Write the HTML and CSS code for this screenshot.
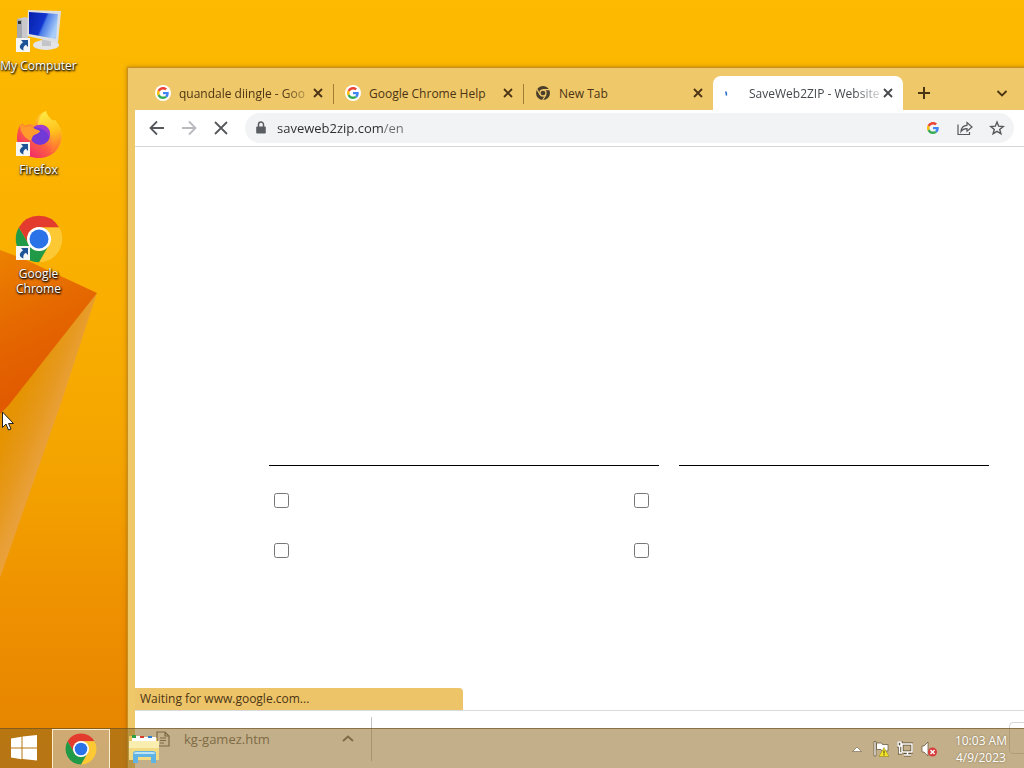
FILE: index.html
```html
<!DOCTYPE html>
<html lang="en">
<head>
  <meta charset="UTF-8" />
  <meta name="viewport" content="width=device-width, initial-scale=1.0"/>
  <title>Desktop</title>
  <link rel="stylesheet" href="styles.css">
</head>
<body>
  <!-- Shared logos -->
  <svg class="defs" aria-hidden="true">
    <symbol id="google" viewBox="0 0 48 48">
      <path fill="#EA4335" d="M24 9.5c3.54 0 6.71 1.22 9.21 3.6l6.85-6.85C35.9 2.38 30.47 0 24 0 14.62 0 6.51 5.38 2.56 13.22l7.98 6.19C12.43 13.72 17.74 9.5 24 9.5z"/>
      <path fill="#4285F4" d="M46.98 24.55c0-1.57-.15-3.09-.38-4.55H24v9.02h12.94c-.58 2.96-2.26 5.48-4.78 7.18l7.73 6c4.51-4.18 7.09-10.36 7.09-17.65z"/>
      <path fill="#FBBC05" d="M10.53 28.59c-.48-1.45-.76-2.99-.76-4.59s.27-3.14.76-4.59l-7.98-6.19C.92 16.46 0 20.12 0 24s.92 7.54 2.56 10.78l7.97-6.19z"/>
      <path fill="#34A853" d="M24 48c6.48 0 11.93-2.13 15.89-5.81l-7.73-6c-2.15 1.45-4.92 2.3-8.16 2.3-6.26 0-11.57-4.22-13.47-9.91l-7.98 6.19C6.51 42.62 14.62 48 24 48z"/>
    </symbol>
    <symbol id="chrome" viewBox="0 0 48 48">
      <path fill="#e33b2e" d="M24 12.5H44.2A23.3 23.3 0 0 0 3.8 12.5L14 29.8A11.5 11.5 0 0 1 24 12.5z"/>
      <path fill="#fcc934" d="M44.2 12.5H24A11.5 11.5 0 0 1 34 29.8L24 47.3A23.3 23.3 0 0 0 44.2 12.5z"/>
      <path fill="#219a48" d="M3.8 12.5L14 29.8A11.5 11.5 0 0 0 34 29.8L24 47.3A23.3 23.3 0 0 1 3.8 12.5z"/>
      <circle cx="24" cy="24" r="12" fill="#fff"/>
      <circle cx="24" cy="24" r="9.5" fill="#2a72e8"/>
    </symbol>
    <symbol id="shortcut" viewBox="0 0 14 14">
      <path fill="#f6f6f4" d="M0 0h14v14H0z"/>
      <path fill="#1f5397" d="M5 2h7v7L9.800 6.800C7.500 8.500 7 10 7.500 12.500 3 11 2.500 7.500 7 4.300z"/>
    </symbol>
    <symbol id="close" viewBox="0 0 16 16">
      <path fill="none" stroke="currentColor" stroke-width="1.8" d="M4 4l8 8M12 4l-8 8"/>
    </symbol>
  </svg>

  <div class="desktop">
    <svg class="wallpaper" viewBox="0 0 128 768" width="128" height="768" aria-hidden="true">
      <defs>
        <linearGradient id="fold" x1="0" y1="0" x2="0.300" y2="1">
          <stop offset="0" stop-color="#ec8200"/>
          <stop offset=".45" stop-color="#e56900"/>
          <stop offset="1" stop-color="#e05500"/>
        </linearGradient>
        <linearGradient id="beam" gradientUnits="userSpaceOnUse" x1="0" y1="440" x2="56" y2="462">
          <stop offset="0" stop-color="#e59300"/>
          <stop offset=".4" stop-color="#e6981a"/>
          <stop offset=".75" stop-color="#e9a03a"/>
          <stop offset="1" stop-color="#eda22c"/>
        </linearGradient>
      </defs>
      <path fill="url(#beam)" d="M97 293L62 400L0 578V400z"/>
      <path fill="url(#fold)" d="M0 250L24 259L97 293L8 406L0 414z"/>
    </svg>

    <nav class="shortcuts" aria-label="Desktop">
      <button class="shortcut">
        <svg class="shortcut-icon" viewBox="0 0 48 48">
          <defs>
            <linearGradient id="screen" x1="0" y1="0" x2="1" y2=".4">
              <stop offset="0" stop-color="#0620a8"/>
              <stop offset=".55" stop-color="#1235cf"/>
              <stop offset=".62" stop-color="#4a7be8"/>
              <stop offset="1" stop-color="#a9cdf8"/>
            </linearGradient>
          </defs>
          <path fill="#c9c9cb" d="M2 12l8-2 3 1v24l-4 2-7-4z"/>
          <path fill="#a5a8ac" d="M2 12l5 1v23l-5-3z"/>
          <path fill="#333" d="M3 14h3v3H3z"/>
          <ellipse cx="31" cy="38" rx="13" ry="5" fill="#e4e4e6"/>
          <path fill="#c3c5c9" d="M27 31l9 1v7H27z"/>
          <path fill="#dedfe1" d="M13 3l33 1-3 32-31-7z"/>
          <path fill="url(#screen)" d="M14 5l29 2-2 25-27-5z"/>
          <use href="#shortcut" x="1" y="31" width="14" height="14"/>
        </svg>
        <span>My Computer</span>
      </button>
      <button class="shortcut">
        <svg class="shortcut-icon" viewBox="0 0 48 48">
          <defs>
            <linearGradient id="flame" x1=".85" y1=".05" x2=".2" y2=".9">
              <stop offset="0" stop-color="#fff03c"/>
              <stop offset=".35" stop-color="#ffb42a"/>
              <stop offset=".65" stop-color="#ff6040"/>
              <stop offset="1" stop-color="#f02c6a"/>
            </linearGradient>
            <linearGradient id="flame-tail" x1="0" y1="0" x2=".2" y2="1">
              <stop offset="0" stop-color="#fff04a"/>
              <stop offset=".6" stop-color="#ffc01c"/>
              <stop offset="1" stop-color="#ff7730"/>
            </linearGradient>
          </defs>
          <path fill="url(#flame)" d="M5 14c2-2 4-1 5 1 3-2 6-2 10-1C20 8 24 2 31 0c1 5 4 7 7 10l2-1c6 7 8 14 6 21-2 10-11 17-22 17C10 47 2 38 2 27c0-5 1-9 3-13z"/>
          <path fill="url(#flame-tail)" d="M31 0c1 5 4 7 7 10l2-1c6 7 8 14 6 21-2 6-6 10-11 12 4-6 5-13 1-19-3-5-11-4-13-10 1-6 3-10 8-13z"/>
          <circle cx="25" cy="24" r="10" fill="#7339d6"/>
          <path fill="#a23ccb" d="M19 16c5-4 14-3 16 5 0 2 0 4-1 5-1-5-6-9-15-10z"/>
          <path fill="#ff9a2c" d="M5 14c2-1 4 0 5 2 4-2 7-1 10 2 2 1 4 1 5 2-1 3-5 3-7 5-2 3-1 6-4 4-5-3-9-8-9-15z"/>
          <use href="#shortcut" x="1" y="31" width="14" height="14"/>
        </svg>
        <span>Firefox</span>
      </button>
      <button class="shortcut">
        <svg class="shortcut-icon" viewBox="0 0 48 48">
          <use href="#chrome" width="48" height="48"/>
          <use href="#shortcut" x="1" y="31" width="14" height="14"/>
        </svg>
        <span>Google Chrome</span>
      </button>
    </nav>

    <!-- Browser window -->
    <section class="window" aria-label="Browser">
      <div class="tabs">
        <div class="tab">
          <span class="favicon"><svg width="12" height="12"><use href="#google"/></svg></span>
          <span class="tab-title tab-title-fade">quandale diingle - Goo</span>
          <button class="icon-btn" aria-label="Close tab"><svg width="16" height="16"><use href="#close"/></svg></button>
        </div>
        <div class="tab">
          <span class="favicon"><svg width="12" height="12"><use href="#google"/></svg></span>
          <span class="tab-title">Google Chrome Help</span>
          <button class="icon-btn" aria-label="Close tab"><svg width="16" height="16"><use href="#close"/></svg></button>
        </div>
        <div class="tab tab-last">
          <svg width="16" height="16" viewBox="0 0 16 16">
            <circle cx="8" cy="8" r="7" fill="#4b3f2c"/>
            <circle cx="8" cy="8" r="3" fill="#4b3f2c" stroke="#efc766" stroke-width="1.300"/>
            <path stroke="#efc766" stroke-width="1.200" d="M8 4.700h6.500M5.100 9.700L2 4.200M10.900 9.700L7.700 15"/>
          </svg>
          <span class="tab-title">New Tab</span>
          <button class="icon-btn" aria-label="Close tab"><svg width="16" height="16"><use href="#close"/></svg></button>
        </div>
        <div class="tab tab-active">
          <svg width="16" height="16" viewBox="0 0 16 16"><path fill="none" stroke="#2d6fc4" stroke-width="1.600" d="M.5 6.500q1.200 1.500.8 4"/></svg>
          <span class="tab-title tab-title-fade">SaveWeb2ZIP - Website</span>
          <button class="icon-btn" aria-label="Close tab"><svg width="16" height="16"><use href="#close"/></svg></button>
        </div>
        <button class="icon-btn new-tab" aria-label="New tab">
          <svg width="16" height="16" viewBox="0 0 16 16"><path stroke="currentColor" stroke-width="2" d="M8 2v12M2 8h12"/></svg>
        </button>
        <button class="icon-btn tab-search" aria-label="Search tabs">
          <svg width="16" height="16" viewBox="0 0 16 16"><path fill="none" stroke="currentColor" stroke-width="1.800" d="M3.500 6L8 10.500 12.500 6"/></svg>
        </button>
      </div>

      <div class="toolbar">
        <button class="icon-btn" aria-label="Back">
          <svg width="16" height="16" viewBox="0 0 16 16"><path fill="none" stroke="currentColor" stroke-width="1.800" d="M15 8H2M8 1.500L1.500 8 8 14.500"/></svg>
        </button>
        <button class="icon-btn disabled" aria-label="Forward" disabled>
          <svg width="16" height="16" viewBox="0 0 16 16"><path fill="none" stroke="currentColor" stroke-width="1.800" d="M1 8h13M8 1.500L14.500 8 8 14.500"/></svg>
        </button>
        <button class="icon-btn" aria-label="Stop loading">
          <svg width="16" height="16" viewBox="0 0 16 16"><path stroke="currentColor" stroke-width="1.800" d="M2 2l12 12M14 2L2 14"/></svg>
        </button>
        <div class="omnibox">
          <svg width="16" height="16" viewBox="0 0 16 16"><path fill="#5b5e63" d="M4 6.500h8a.8.8 0 0 1 .8.8v5.400a.8.8 0 0 1-.8.8H4a.8.8 0 0 1-.8-.8V7.300a.8.8 0 0 1 .8-.8z"/><path fill="none" stroke="#5b5e63" stroke-width="1.500" d="M5.500 7V4.500a2.500 2.500 0 0 1 5 0V7"/></svg>
          <input class="url" type="text" value="saveweb2zip.com/en" aria-label="Address" spellcheck="false">
          <button class="icon-btn" aria-label="Google"><svg width="12" height="12"><use href="#google"/></svg></button>
          <button class="icon-btn" aria-label="Share">
            <svg width="16" height="16" viewBox="0 0 16 16"><path fill="none" stroke="currentColor" stroke-width="1.200" d="M1 4.500V14.500H12.500V12M4 11.500C4.300 7.500 6.500 5.500 10 5.300V2.500L15 7 10 11.300V8.700C7.500 8.600 5.500 9.300 4 11.500z"/></svg>
          </button>
          <button class="icon-btn" aria-label="Bookmark">
            <svg width="16" height="16" viewBox="0 0 16 16"><path fill="none" stroke="currentColor" stroke-width="1.400" d="M8 2l1.700 4.200 4.500.3-3.500 2.900 1.200 4.400L8 11.400l-3.900 2.400 1.200-4.400L1.800 6.500l4.500-.3z"/></svg>
          </button>
        </div>
      </div>

      <main class="page">
        <form class="copier">
          <div class="fields">
            <input class="field field-url" type="text" aria-label="Website address">
            <input class="field" type="text" aria-label="File name">
          </div>
          <div class="options">
            <label class="option"><input type="checkbox" aria-label="Option 1"></label>
            <label class="option"><input type="checkbox" aria-label="Option 2"></label>
            <label class="option"><input type="checkbox" aria-label="Option 3"></label>
            <label class="option"><input type="checkbox" aria-label="Option 4"></label>
          </div>
        </form>
        <div class="status">Waiting for www.google.com...</div>
      </main>

      <div class="shelf">
        <div class="download">
          <svg width="16" height="16" viewBox="0 0 16 16"><path fill="none" stroke="currentColor" stroke-width="1.200" d="M1 1h8l4 4v10H1zM9 1v4h4M4 7h6M4 9.500h6M4 12h4"/></svg>
          <span class="download-name">kg-gamez.htm</span>
          <button class="icon-btn" aria-label="Download options">
            <svg width="16" height="16" viewBox="0 0 16 16"><path fill="none" stroke="currentColor" stroke-width="1.800" d="M3 10l5-4.500L13 10"/></svg>
          </button>
        </div>
        <button class="show-all" aria-label="Show all"></button>
      </div>
    </section>

    <footer class="taskbar">
      <button class="task start" aria-label="Start">
        <svg width="28" height="28" viewBox="0 0 28 28"><path fill="#fff" d="M1 3.500l10.500-1.700v10.700H1zM12.500 1.600L27 0v12.500H12.500zM1 13.500h10.500v10.700L1 22.500zM12.500 13.500H27v12l-14.500-1.600z"/></svg>
      </button>
      <button class="task task-active" aria-label="Google Chrome"><svg width="32" height="32"><use href="#chrome"/></svg></button>
      <button class="task" aria-label="File Explorer">
        <svg width="32" height="32" viewBox="0 0 32 32">
          <path fill="#e8c45c" d="M1 3h9l2 2h17v20H1z"/>
          <path fill="#fff" d="M4 3h8v5H4zM12 4h8v4h-8zM20 4h8v4h-8z"/>
          <path fill="#2f9e44" d="M4 2h4v3H4z"/>
          <path fill="#d33f2c" d="M12 3h4v2h-4z"/>
          <path fill="#2f7fd0" d="M20 3h4v2h-4z"/>
          <path fill="#f2da82" d="M1 8h30v19H1z"/>
          <path fill="#faedb0" d="M1 8h30v7H1z"/>
          <path fill="#5fb4e4" d="M5 30V21q0-3 3-3h17q3 0 3 3v9h-5v-6H10v6z"/>
          <path fill="#b9e4f8" d="M6 21q0-2 2-2h17q2 0 2 2z"/>
        </svg>
      </button>
      <div class="tray">
        <svg width="16" height="16" viewBox="0 0 16 16"><path fill="#fff" stroke="#6b5c3c" stroke-width=".6" d="M3.500 10.500L8 6l4.500 4.500z"/></svg>
        <svg width="16" height="16" viewBox="0 0 16 16">
          <path fill="#fff" stroke="#5e4f30" stroke-width=".7" d="M1 .5h2V15H1zM3.500 2h5l1 1.500H15V10H9L8 8.500H3.500z"/>
          <path fill="#f4e52c" stroke="#8a7b10" stroke-width=".5" d="M11 6.500l5 9H6z"/>
          <path stroke="#5b5208" stroke-width="1.200" d="M11 9.500v3M11 13.300v1.200"/>
        </svg>
        <svg width="16" height="16" viewBox="0 0 16 16">
          <path fill="none" stroke="#5e4f30" stroke-width="3" d="M5 3h10v8H5zM7 14h7M10.500 11v3M1 1h3v4H1zM2.500 5v7H5"/>
          <path fill="none" stroke="#fff" stroke-width="1.500" d="M5 3h10v8H5zM7 14h7M10.500 11v3M1 1h3v4H1zM2.500 5v7H5"/>
        </svg>
        <svg width="16" height="16" viewBox="0 0 16 16">
          <path fill="#fff" stroke="#5e4f30" stroke-width=".7" d="M1 5h2l4-4v14l-4-4H1z"/>
          <circle cx="11.500" cy="11" r="4.500" fill="#d83b3b"/>
          <path stroke="#fff" stroke-width="1.400" d="M9.500 9l4 4M13.500 9l-4 4"/>
        </svg>
        <time class="clock"><span>10:03 AM</span><span>4/9/2023</span></time>
      </div>
    </footer>

    <svg class="cursor" width="12" height="20" viewBox="0 0 12 20" aria-hidden="true"><path fill="#fff" stroke="#222" d="M.5 1v15.500L4 13l2.500 6 2.500-1-2.500-5.500h5z"/></svg>
  </div>
</body>
</html>
```

FILE: styles.css
```css
* {
  box-sizing: border-box;
}

body {
  margin: 0;
  font-family: "Open Sans", "Noto Sans", sans-serif;
  font-size: 12px;
  color: #3c4043;
}

svg {
  display: block;
  flex: none;
}

button {
  padding: 0;
  border: none;
  background: none;
  font: inherit;
  color: inherit;
}

.defs {
  position: absolute;
  width: 0;
  height: 0;
}

.desktop {
  position: relative;
  display: flex;
  flex-direction: column;
  height: 100vh;
  overflow: hidden;
  background: linear-gradient(#fdba00, #f9ae00 40%, #f4a400 60%, #ee9000 80%, #e58200);
}

.wallpaper {
  position: absolute;
  top: 0;
  left: 0;
}

/* Desktop shortcuts */
.shortcuts {
  position: relative;
  display: flex;
  flex-direction: column;
  flex: 1;
  align-items: flex-start;
  padding-top: 7px;
}

.shortcut {
  display: flex;
  flex-direction: column;
  align-items: center;
  width: 77px;
  height: 104px;
  line-height: 15px;
  color: #fff;
  text-shadow: 0 1px 2px #000, 1px 1px 2px #000;
}

.shortcut-icon {
  width: 48px;
  height: 48px;
  margin-bottom: 3px;
}

/* Browser window, runs off the right edge and under the taskbar */
.window {
  position: absolute;
  top: 67px;
  right: -107px;
  bottom: 0;
  left: 127px;
  display: flex;
  flex-direction: column;
  padding: 0 8px 0 7px;
  border: 1px solid #c98e20;
  border-width: 1px 0 0 1px;
  background: #efc86a;
  box-shadow: 0 0 4px rgba(120, 70, 0, 0.5);
}

.tabs {
  display: flex;
  align-items: center;
  height: 42px;
  padding: 8px 113px 0 8px;
  color: #4b3414;
}

.tab {
  display: flex;
  align-items: center;
  width: 190px;
  height: 34px;
  padding: 0 7px 0 12px;
  position: relative;
}

.tab::after {
  content: "";
  position: absolute;
  right: -1px;
  top: 8px;
  height: 20px;
  border-right: 1px solid #a17c35;
}

.tab-last::after,
.tab-active::after {
  display: none;
}

.tab-active {
  background: #fff;
  border-radius: 8px 8px 0 0;
  color: #45484c;
}

.favicon {
  display: flex;
  align-items: center;
  justify-content: center;
  width: 16px;
  height: 16px;
  border-radius: 50%;
  background: #fff;
}

.tab-title {
  flex: 1;
  margin-left: 8px;
  white-space: nowrap;
}

.tab-title-fade {
  mask-image: linear-gradient(90deg, #000 80%, rgba(0, 0, 0, 0.2));
}

.icon-btn {
  display: flex;
  align-items: center;
  justify-content: center;
  width: 16px;
  height: 16px;
}

.new-tab {
  margin-left: 13px;
}

.tab-search {
  margin-left: auto;
}

.toolbar {
  display: flex;
  align-items: center;
  gap: 16px;
  height: 37px;
  padding: 0 109px 0 14px;
  border-bottom: 1px solid #d5d6d8;
  background: #fff;
  color: #55585c;
}

.disabled {
  color: #b8babd;
}

.omnibox {
  display: flex;
  flex: 1;
  align-items: center;
  gap: 16px;
  height: 30px;
  padding: 0 9px 0 8px;
  border-radius: 15px;
  background: #f1f3f4;
}

.url {
  flex: 1;
  min-width: 0;
  margin-left: -8px;
  padding: 0;
  border: none;
  outline: none;
  background: linear-gradient(90deg, #2b2d30 107px, #6a6d72 107px);
  background-clip: text;
  font: inherit;
  font-size: 13px;
  color: transparent;
}

.page {
  position: relative;
  flex: 1;
  background: #fff;
}

.copier {
  width: 720px;
  margin: 0 auto;
  padding-top: 278px;
}

.fields {
  display: flex;
  gap: 20px;
}

.field {
  flex: 1;
  height: 41px;
  padding: 0;
  border: none;
  border-bottom: 1px solid #000;
  outline: none;
  background: transparent;
  font: inherit;
}

.field-url {
  flex: 0 0 390px;
}

.options {
  display: grid;
  grid-template-columns: 1fr 1fr;
  padding-top: 9px;
}

.option {
  display: flex;
  align-items: center;
  height: 50px;
  padding-left: 5px;
}

.option input {
  width: 15px;
  height: 15px;
  margin: 0;
}

/* Loading bubble over the page corner */
.status {
  position: absolute;
  bottom: 0;
  left: 0;
  width: 328px;
  padding: 0 5px;
  border-radius: 0 4px 0 0;
  background: #edc468;
  line-height: 22px;
  color: #4b3414;
}

.shelf {
  display: flex;
  align-items: flex-start;
  height: 58px;
  padding: 6px 0;
  border-top: 1px solid #d9dadb;
  background: #fff;
}

.download {
  display: flex;
  align-items: center;
  width: 237px;
  height: 44px;
  padding: 0 15px 0 21px;
  border-right: 1px solid #c4c4c4;
  color: #6c6c6c;
}

.download-name {
  flex: 1;
  margin-left: 12px;
  font-size: 13px;
}

.show-all {
  width: 80px;
  height: 32px;
  margin: 5px 34px 0 auto;
  border: 1px solid #d5d6d8;
  border-radius: 4px;
}

/* Taskbar */
.taskbar {
  position: relative;
  display: flex;
  align-items: center;
  height: 40px;
  border-top: 1px solid rgba(100, 75, 30, 0.6);
  background: rgba(142, 106, 36, 0.53);
}

.task {
  display: flex;
  align-items: center;
  justify-content: center;
  width: 60px;
  height: 40px;
}

.start {
  width: 52px;
  padding-right: 4px;
}

.task-active {
  width: 58px;
  margin-right: 4px;
  border: 1px solid #fbeed2;
  background: rgba(222, 205, 180, 0.6);
}

.tray {
  display: flex;
  align-items: center;
  gap: 8px;
  margin-left: auto;
  padding-right: 17px;
  color: #fff;
  text-shadow: 0 0 2px rgba(80, 60, 20, 0.6);
}

.clock {
  display: flex;
  flex-direction: column;
  align-items: center;
  margin-left: 10px;
  line-height: 17px;
}

.cursor {
  position: absolute;
  top: 411px;
  left: 2px;
}
```
